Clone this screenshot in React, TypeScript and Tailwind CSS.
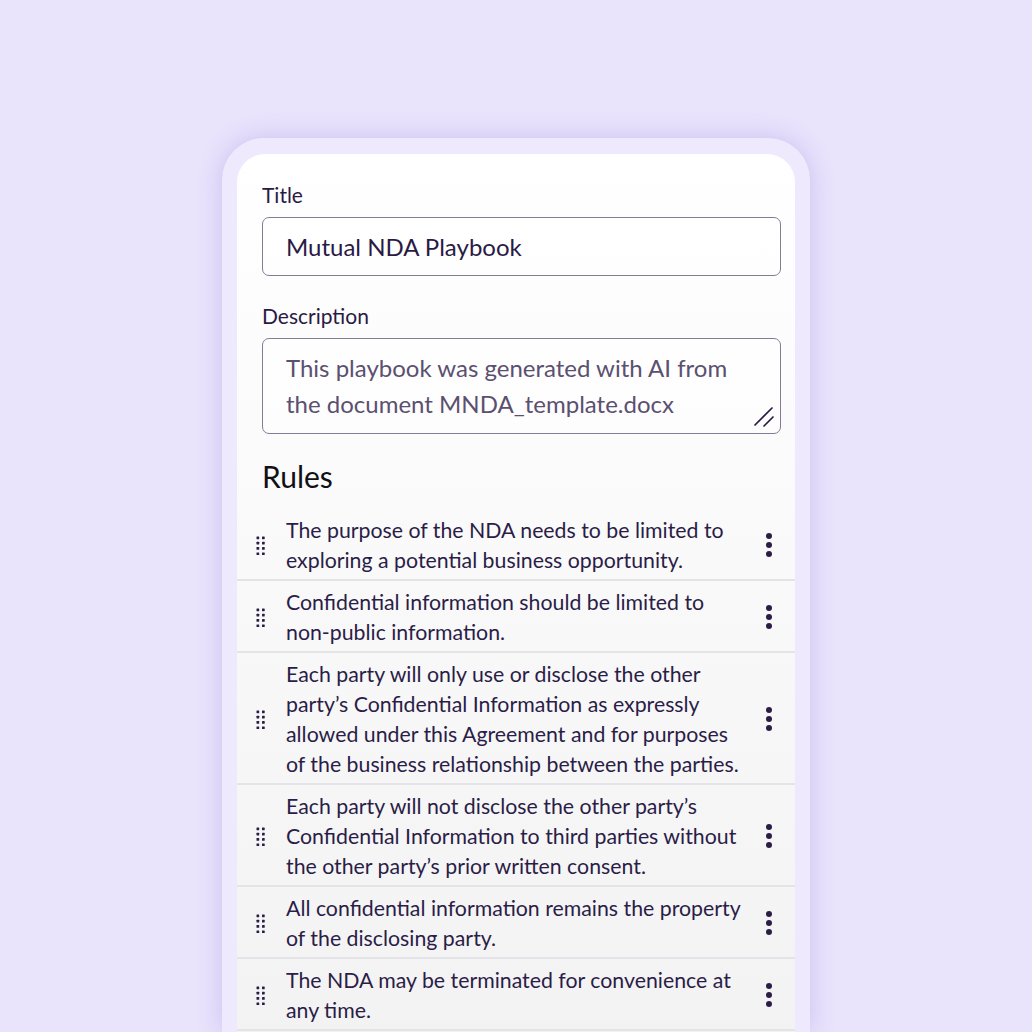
import React from "react";

const rules: string[][] = [
  ["The purpose of the NDA needs to be limited to", "exploring a potential business opportunity."],
  ["Confidential information should be limited to", "non-public information."],
  [
    "Each party will only use or disclose the other",
    "party\u2019s Confidential Information as expressly",
    "allowed under this Agreement and for purposes",
    "of the business relationship between the parties.",
  ],
  [
    "Each party will not disclose the other party\u2019s",
    "Confidential Information to third parties without",
    "the other party\u2019s prior written consent.",
  ],
  ["All confidential information remains the property", "of the disclosing party."],
  ["The NDA may be terminated for convenience at", "any time."],
];

function DragHandle() {
  return (
    <svg width="9" height="19" viewBox="0 0 9 19" className="shrink-0" fill="#2b1d47">
      {[0, 1, 2, 3].map((r) =>
        [0, 1].map((c) => (
          <rect key={`${r}-${c}`} x={c * 5.5 + 0.5} y={r * 5.3 + 0.5} width="2.7" height="2.7" rx="0.4" />
        ))
      )}
    </svg>
  );
}

function Kebab() {
  return (
    <svg width="8" height="26" viewBox="0 0 8 26" className="shrink-0" fill="#2b1d47">
      <circle cx="4" cy="4" r="3" />
      <circle cx="4" cy="13" r="3" />
      <circle cx="4" cy="22" r="3" />
    </svg>
  );
}

export default function App() {
  return (
    <div
      className="h-[1032px] w-full overflow-hidden bg-[#e9e3fc] flex justify-center pt-[138px]"
      style={{ fontFamily: "Lato, 'Noto Sans', sans-serif" }}
    >
      <div className="w-[588px] shrink-0 rounded-t-[42px] bg-[#efe9fd] pt-[16px] px-[15px] shadow-[0_0_24px_rgba(130,100,210,0.28)]">
        <div className="rounded-t-[28px] bg-gradient-to-b from-white to-[#f2f2f3] pb-10">
          <div className="pl-[25px] pr-[14px] pt-[28px]">
            <div className="text-[21px] leading-[26px] text-[#2a1a45]">Title</div>
            <div className="mt-[9px] h-[59px] rounded-[7px] border-[1.5px] border-[#857b96] bg-white/60 flex items-center pl-[23px] text-[24px] text-[#2a1a45]">
              Mutual NDA Playbook
            </div>
            <div className="mt-[27px] text-[21px] leading-[26px] text-[#2a1a45]">Description</div>
            <div className="relative mt-[9px] h-[96px] rounded-[7px] border-[1.5px] border-[#857b96] bg-white/60 pl-[23px] pr-4 pt-[11px] text-[24px] leading-[36px] text-[#5b5070] whitespace-nowrap">
              This playbook was generated with AI from
              <br />
              the document MNDA_template.docx
              <svg width="24" height="24" viewBox="0 0 24 24" className="absolute right-[4px] bottom-[4px]" stroke="#2a1a45" strokeWidth="1.7" strokeLinecap="round">
                <line x1="3" y1="20" x2="20" y2="3" />
                <line x1="12" y1="21" x2="21" y2="12" />
              </svg>
            </div>
            <div className="mt-[24px] text-[30px] leading-[36px] text-[#111015]">Rules</div>
          </div>
          <div className="mt-[15px]">
            {rules.map((lines, i) => (
              <div
                key={i}
                className="flex items-center pt-[6px] pb-[4px] pl-[19px] pr-[22px] border-b-2 border-[#e4e3e7]"
              >
                <DragHandle />
                <div className="ml-[21px] flex-1 text-[21.3px] leading-[30px] text-[#2b1d47] whitespace-nowrap">
                  {lines.map((l, j) => (
                    <div key={j}>{l}</div>
                  ))}
                </div>
                <Kebab />
              </div>
            ))}
          </div>
        </div>
      </div>
    </div>
  );
}
